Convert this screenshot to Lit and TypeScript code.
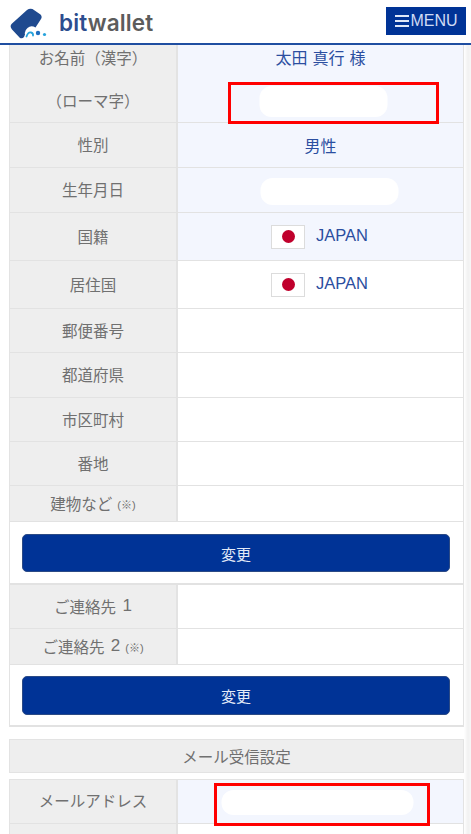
import { LitElement, html, css, nothing } from "lit";
import { customElement } from "lit/decorators.js";

type Row = { h: number; label: string; digit?: string; note?: string; value?: string; flag?: boolean; tint?: boolean; pill?: [number, number, number]; cut?: boolean; nudge?: boolean };

const flag = html`<span class="flag"><i></i></span>`;

@customElement("app-root")
export class AppRoot extends LitElement {
  static styles = css`
    :host { display: block; width: 471px; height: 834px; overflow: hidden; position: relative; background: linear-gradient(90deg, #fff 0, #fff 464px, #f1f1f1 468px, #f7f7f7 471px); font-family: "Liberation Sans", "Noto Sans CJK JP", sans-serif; }
    header { height: 43px; background: #fff; border-bottom: 2px solid #1f4ea1; display: flex; align-items: center; justify-content: space-between; padding: 0 5px 0 10px; }
    .brand { display: flex; align-items: center; gap: 11px; }
    .word { font-family: Inter, sans-serif; font-weight: 600; font-size: 22.5px; letter-spacing: 0.15px; color: #5c5c5c; line-height: 1; margin-top: 3px; }
    .word b { font-weight: 600; color: #2d4d8f; }
    .menu { width: 80px; height: 28px; box-sizing: border-box; margin-top: -1px; background: #003396; color: #cfdcf5; display: flex; align-items: center; justify-content: center; gap: 1px; font-size: 16px; padding-left: 1px; }
    .bars { width: 14px; height: 12px; border-top: 2px solid #dfe8f8; border-bottom: 2px solid #dfe8f8; box-sizing: border-box; position: relative; }
    .bars::after { content: ""; position: absolute; left: 0; right: 0; top: 3px; height: 2px; background: #dfe8f8; }
    main { padding: 0 7px 0 9px; }
    .table { border-left: 1px solid #e3e3e3; border-right: 1px solid #e3e3e3; }
    .row { display: grid; grid-template-columns: 168px 1fr; box-sizing: border-box; border-bottom: 1px solid #e2e2e2; }
    .lab { background: #eeeeee; border-right: 2px solid #e3e3e3; color: #707070; font-size: 15.5px; word-spacing: 2px; display: flex; align-items: center; justify-content: center; white-space: pre; padding-bottom: 2px; }
    .lab small { font-size: 11px; margin-left: 5px; margin-top: 3px; }
    .lab .digit { font-size: 17px; }
    .val { color: #2b4ea0; font-size: 16px; word-spacing: 0.5px; display: flex; align-items: center; justify-content: center; gap: 11px; background: #fff; position: relative; }
    .val.tint { background: #f3f6fe; }
    .cut > div { padding-bottom: 11px; }
    .nudge > .lab { padding-bottom: 4px; }
    .flag { width: 34px; height: 24px; box-sizing: border-box; border: 1px solid #dcdcdc; background: #fff; display: flex; align-items: center; justify-content: center; }
    .flag i { width: 13px; height: 13px; border-radius: 50%; background: #c0002c; display: block; }
    .jp { margin-top: -3px; margin-right: 2px; font-size: 16.5px; }
    .pill { background: #fff; display: block; border-radius: 12px; }
    .red { position: absolute; border: 3px solid #f00; box-sizing: border-box; }
    .act { height: 63px; box-sizing: border-box; border-bottom: 2px solid #e2e2e2; padding: 12px 13px 0 12px; background: #fff; }
    .act.second { height: 62px; padding-top: 11px; }
    .second .btn { height: 39px; }
    .btn { height: 38px; box-sizing: border-box; background: #003396; border: 1px solid #2b4a85; border-radius: 5px; color: #e2e9f7; display: flex; align-items: center; justify-content: center; font-size: 15px; }
    .gap { height: 12px; }
    .sec { height: 34px; margin-bottom: 6px; box-sizing: border-box; background: #eeeeee; border: 1px solid #e3e3e3; color: #707070; font-size: 15.5px; display: flex; align-items: center; justify-content: center; }
    .top { border-top: 1px solid #e3e3e3; }
  `;

  rowT(r: Row) {
    return html`<div class="row ${r.cut ? "cut" : ""} ${r.nudge ? "nudge" : ""}" style="height:${r.h}px">
      <div class="lab">${r.label}${r.digit ? html`<span class="digit">${r.digit}</span>` : nothing}${r.note ? html`<small>${r.note}</small>` : nothing}</div>
      <div class="val ${r.tint ? "tint" : ""}">
        ${r.flag ? flag : nothing}
        ${r.value ? html`<span class=${r.flag ? "jp" : ""}>${r.value}</span>` : nothing}
        ${r.pill ? html`<span class="pill" style="width:${r.pill[0]}px;height:${r.pill[1]}px;transform:translate(${r.pill[2]}px,1px)"></span>` : nothing}
      </div>
    </div>`;
  }

  render() {
    const a: Row[] = [
      { h: 34, label: "お名前（漢字）", value: "太田 真行 様", tint: true, cut: true },
      { h: 44, label: "（ローマ字）", tint: true, pill: [128, 31, 2.5] },
      { h: 45, label: "性別", value: "男性", tint: true },
      { h: 45, label: "生年月日", tint: true, pill: [138, 27, 8.5] },
      { h: 48, label: "国籍", value: "JAPAN", flag: true, tint: true },
      { h: 48, label: "居住国", value: "JAPAN", flag: true },
      { h: 44, label: "郵便番号" },
      { h: 45, label: "都道府県" },
      { h: 44, label: "市区町村" },
      { h: 44, label: "番地" },
      { h: 36, label: "建物など", note: "(※)" },
    ];
    const b: Row[] = [
      { h: 44, label: "ご連絡先 ", digit: "1" },
      { h: 36, label: "ご連絡先 ", digit: "2", note: "(※)" },
    ];
    return html`
      <header>
        <div class="brand">
          <svg width="38" height="38" viewBox="10 2.5 38 38" aria-hidden="true">
            <path d="M11.5 23.5 L27 9.5 Q29.5 7.5 32.5 8.5 L40.5 14 Q42.5 16 41 18.5 L35.5 27 Q31 24.5 27.5 27.5 Q24 30.5 25 34 L24 36.5 Q22.5 38.5 20 37.5 L12 29 Q9.5 26 11.5 23.5 Z" fill="#1f4a8f"/>
            <path d="M26.5 36 Q28 31.5 31 32 Q33.5 32.5 33 35" fill="none" stroke="#27a3dc" stroke-width="1.8" stroke-linecap="round"/>
            <circle cx="38" cy="32.5" r="2.2" fill="#1f6fc0"/>
            <circle cx="44.5" cy="34" r="1.6" fill="#27a3dc"/>
          </svg>
          <div class="word"><b>bit</b>wallet</div>
        </div>
        <div class="menu"><span class="bars"></span>MENU</div>
      </header>
      <main>
        <div class="table">
          ${a.map((r) => this.rowT(r))}
          <div class="act"><div class="btn">変更</div></div>
          ${b.map((r) => this.rowT(r))}
          <div class="act second"><div class="btn">変更</div></div>
        </div>
        <div class="gap"></div>
        <div class="sec">メール受信設定</div>
        <div class="table top">
          ${this.rowT({ h: 44, label: "メールアドレス", tint: true, pill: [192, 25, -3.5], nudge: true })}
          ${this.rowT({ h: 44, label: "" })}
        </div>
      </main>
      <div class="red" style="left:228px;top:82px;width:211px;height:42px"></div>
      <div class="red" style="left:214px;top:783px;width:216px;height:43px"></div>
    `;
  }
}
